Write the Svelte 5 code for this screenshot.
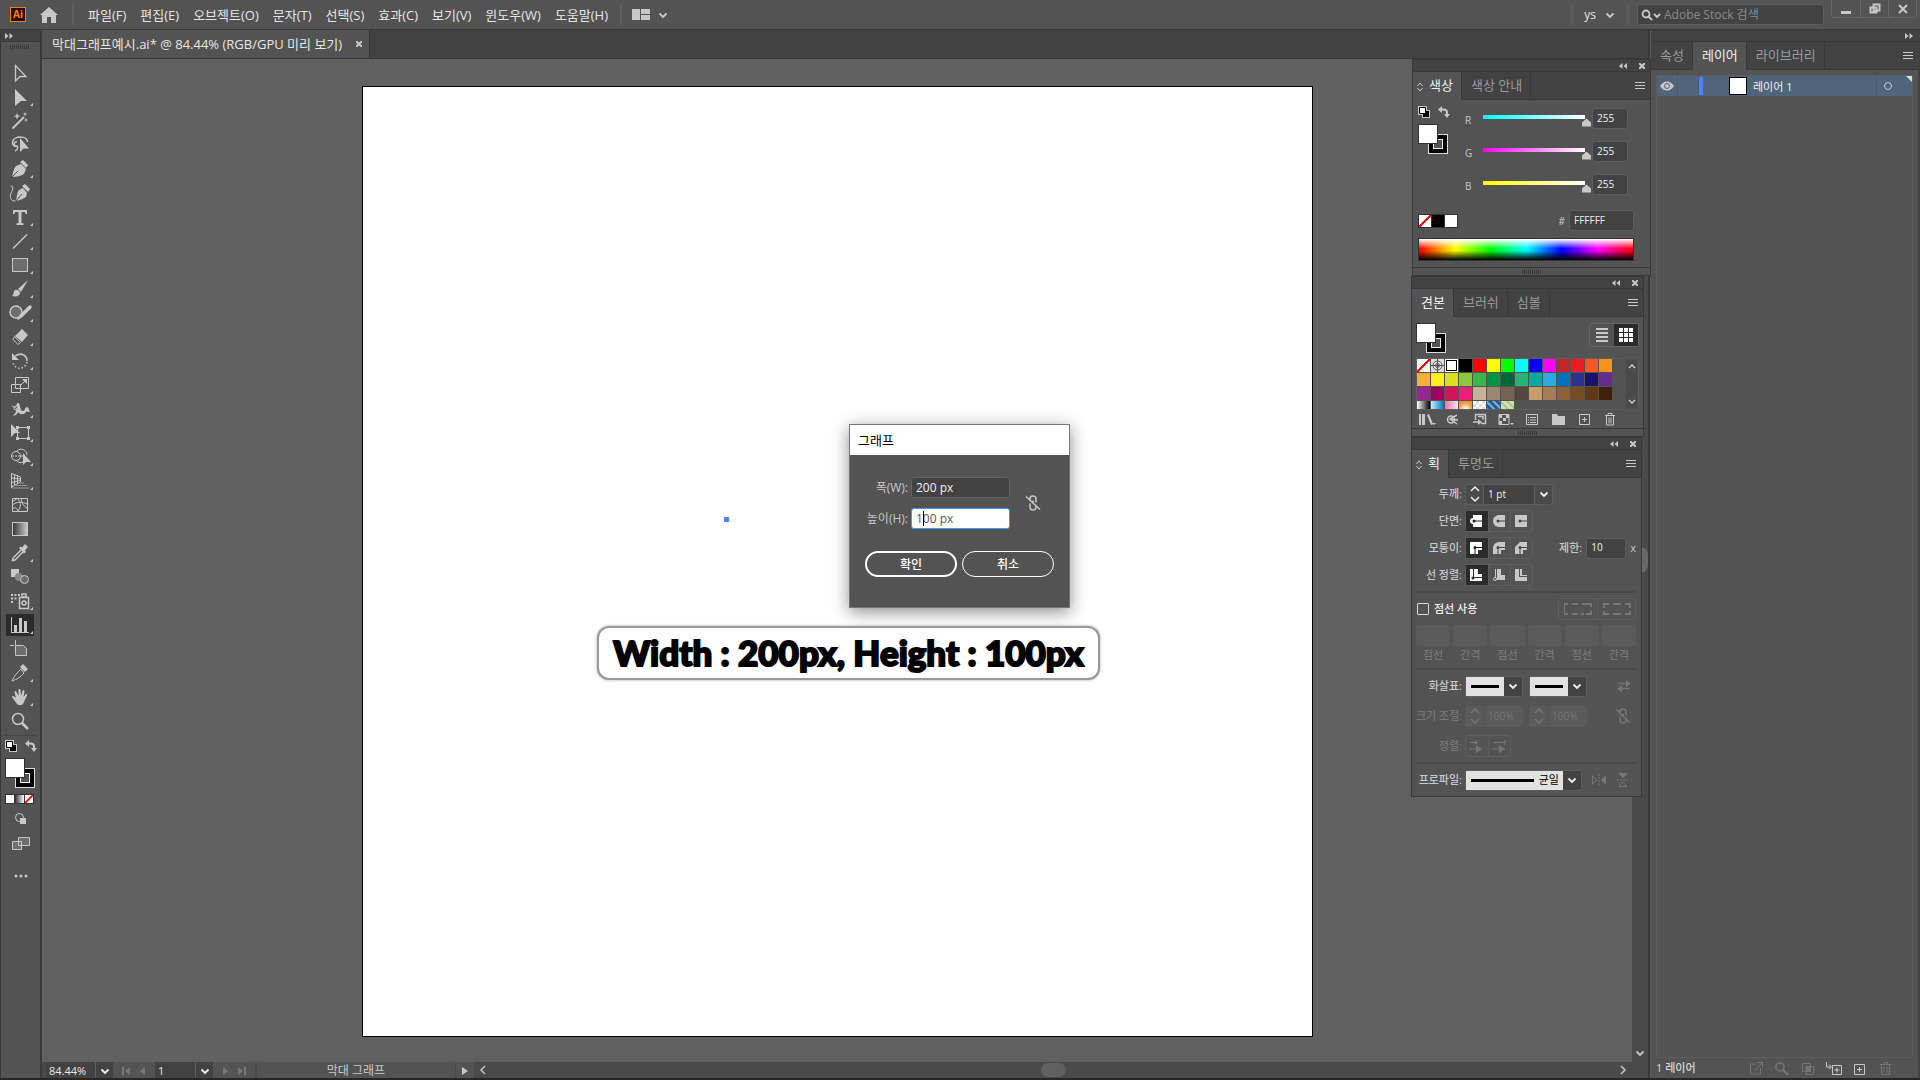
<script>
  const menus = ['파일(F)', '편집(E)', '오브젝트(O)', '문자(T)', '선택(S)', '효과(C)', '보기(V)', '윈도우(W)', '도움말(H)'];

  const tools = [
    { name: 'Selection', icon: '<path d="M15.5 4.5L26 15.5H20L15.5 20z" fill="none" stroke="currentColor" stroke-width="1.300"/>' },
    { name: 'Direct Selection', more: true, icon: '<path d="M15 4l12 12h-6l-6 5z"/>' },
    { name: 'Magic Wand', icon: '<path d="M12.500 19.500L24 8" stroke="currentColor" stroke-width="2"/><path d="M17 4l1 2.500 2.500.5-2.500 1-1 2.500-1-2.500-2.500-1 2.500-.5zM25 3l.6 1.600 1.600.5-1.600.6-.6 1.600-.6-1.600-1.600-.6 1.600-.5zM26 9l.6 1.400 1.400.6-1.400.6-.6 1.400-.6-1.400-1.400-.6 1.400-.6z"/>' },
    { name: 'Lasso', icon: '<path d="M18 13c-4 1-6-1-5.500-4 .5-3 4-5 8-5s7 2 7 5M17 9c-3-1-4 4-1 4s1.500 4-1 5" fill="none" stroke="currentColor" stroke-width="1.500"/><path d="M20 5v14l3.500-3.500H29z"/>' },
    { name: 'Pen', more: true, icon: '<path d="M12 20c1-5 2-9 4-11l5-2 5 5-2 5c-3 2-7 3-12 3z"/><path d="M12 20l6-6" stroke="#535353"/><path d="M20 5l3-2 5 5-2 3z"/>' },
    { name: 'Curvature', icon: '<path d="M16 20c1-5 1-9 3-11l4-2 4 5-1 4c-3 2-6 3-10 4z"/><path d="M16 20l6-7" stroke="#535353"/><path d="M22 5l3-2 5 5-2 3z"/><path d="M10.500 5c5 0 1 5 0 9-.5 4 1 6 5 6" fill="none" stroke="currentColor"/>' },
    { name: 'Type', more: true, icon: '<path d="M13 5h14v4h-1.500l-.5-2h-3.500v11l2 .5V20h-7v-1.500l2-.5V7H15l-.5 2H13z"/>' },
    { name: 'Line Segment', more: true, icon: '<path d="M13 19.500L27 5.500" stroke="currentColor" stroke-width="1.500"/>' },
    { name: 'Rectangle', more: true, icon: '<rect x="12.500" y="5.500" width="15" height="13" fill="#6e6e6e" stroke="currentColor"/>' },
    { name: 'Paintbrush', more: true, icon: '<path d="M28 3l-7 12-3-3z"/><path d="M12 19c2-1 1-4 3-6 2-1 5 1 5 3 0 3-4 4-8 3z"/>' },
    { name: 'Shaper', more: true, icon: '<circle cx="16" cy="11" r="6" fill="#6e6e6e" stroke="currentColor" stroke-width="1.500"/><path d="M30 6l-9 9" stroke="currentColor" stroke-width="3.500" stroke-linecap="round"/><path d="M17 19l1.500-4 2.500 2.500z"/>' },
    { name: 'Eraser', more: true, icon: '<path d="M22 4l6 6-6 7-7-6z"/><path d="M14.500 11.500l6 6-2.500 2-5-5z" fill="none" stroke="currentColor"/>' },
    { name: 'Rotate', more: true, icon: '<path d="M15 7c6-4 12-1 12 5" fill="none" stroke="currentColor" stroke-width="1.500"/><path d="M12 4v7h7z"/><path d="M27 13c-1 7-11 9-14 1" fill="none" stroke="currentColor" stroke-width="1.500" stroke-dasharray="1.500 2"/>' },
    { name: 'Scale', more: true, icon: '<path d="M15.500 4.500h13v11h-13zM11.500 11.500h9v8h-9zM20 13l5-5" fill="none" stroke="currentColor"/><path d="M22 6h5v5z"/>' },
    { name: 'Width', more: true, icon: '<path d="M12 18c7 0 2-11 6-12 3 0 1 8 5 8 2 0 2-4 4-4s2 4 3 5c-3 0-3-1-4 0-2 3-6 3-8 0-1 3-3 4-6 3z"/><circle cx="16" cy="11" r="2" fill="#535353" stroke="currentColor"/><path d="M12 9l4 2 7 5" fill="none" stroke="currentColor"/>' },
    { name: 'Free Transform', more: true, icon: '<path d="M17.500 6.500h11v11h-11z" fill="none" stroke="currentColor"/><path d="M27 5h3v3h-3zM27 16h3v3h-3zM16 16h3v3h-3zM16 5h3v3h-3z"/><path d="M11 3l9 9h-5l-4 4z"/>' },
    { name: 'Shape Builder', more: true, icon: '<circle cx="16" cy="11" r="4.500" fill="none" stroke="currentColor"/><path d="M17 6c4-4 10-1 10 4M17 16c2 2 4 2 6 1" fill="none" stroke="currentColor"/><path d="M12 11h12" stroke="currentColor" stroke-dasharray="2 1"/><path d="M23 8v12l3-3h5z"/>' },
    { name: 'Perspective Grid', more: true, icon: '<path d="M11.500 4v15M11.500 4.500l9 3.500v5l-9 5M14.500 5.500v11M17.500 6.500v8.500M11.500 9l9 1M11.500 13.500l9-2" fill="none" stroke="currentColor"/><path d="M20 14h4M16 16.500h11M12 19h17" stroke="#999"/>' },
    { name: 'Mesh', icon: '<path d="M12.500 5.500h15v13h-15zM12 12c6-4 9-3 16-1M17 5c5 5 4 9 0 14M12 16c4-3 5 0 7 3M22 5c-2 6 4 9 6 11M18 5l-6 4" fill="none" stroke="currentColor"/>' },
    { name: 'Gradient', icon: '<defs><linearGradient id="tg"><stop stop-color="#333"/><stop offset="1" stop-color="#ccc"/></linearGradient></defs><rect x="12.500" y="5.500" width="15" height="13" fill="url(#tg)" stroke="currentColor"/>' },
    { name: 'Eyedropper', more: true, icon: '<path d="M21 9l-8 8-.5 2.500L15 19l8-8" fill="none" stroke="currentColor" stroke-width="1.500"/><path d="M19 7l1.500-1.500 1.500 1 3-3.500 3 3-3 3.500 1 1.500-2 1.500z"/>' },
    { name: 'Blend', icon: '<path d="M11 4h8v8h-8z"/><circle cx="19" cy="12" r="4" fill="#888"/><circle cx="24.500" cy="14.500" r="4" fill="#6e6e6e" stroke="currentColor"/>' },
    { name: 'Symbol Sprayer', more: true, icon: '<path d="M20 8.500h8.500v11h-9v-11zM22 5h4v3h-4z" fill="none" stroke="currentColor" stroke-width="1.500"/><circle cx="24" cy="14" r="2" fill="none" stroke="currentColor" stroke-width="1.500"/><path d="M11 5h2v2h-2zM14.500 5h2v2h-2zM18 5h2v2h-2zM11 8.500h2v2h-2zM14.500 8.500h2v2h-2zM11 12h2v2h-2z"/>' },
    { name: 'Column Graph', more: true, active: true, icon: '<path d="M11 4h1v15h17v1H11zM14 12h3v7h-3zM19 5h3v14h-3zM24 8h3v11h-3z"/>' },
    { name: 'Artboard', icon: '<path d="M10 8.500h4M15.500 3v5" stroke="currentColor"/><path d="M15.500 8.500h8l3 3v7h-11z" fill="#6e6e6e" stroke="currentColor"/>' },
    { name: 'Slice', more: true, icon: '<path d="M12 20c2-5 5-8 9-12l3 4c-4 5-7 6-12 8z" fill="none" stroke="currentColor"/><path d="M20 6l3-3 5 5-3 3z"/>' },
    { name: 'Hand', more: true, icon: '<path d="M17 19l-5-7c0-1.500 1.500-1.500 4 1L14.500 7c0-1.500 1.500-1.500 2 0l2 4V5c0-1.500 2-1.500 2 0l.5 6 1.500-5c.5-1.500 2-1 2 .5L23.500 12l2-2.500c1-1 2 0 1.500 1L23 19c-1 1.500-5 1.500-6 0z"/>' },
    { name: 'Zoom', icon: '<circle cx="18" cy="10" r="5.500" fill="none" stroke="currentColor" stroke-width="1.500"/><path d="M22 14l6 6" stroke="currentColor" stroke-width="2.500"/>' }
  ];

  const channels = [
    { label: 'R', color: '#00ffff' },
    { label: 'G', color: '#ff00ff' },
    { label: 'B', color: '#ffff00' }
  ];

  const solidSwatches = [
    '#000000', '#ff0000', '#ffff00', '#00ff00', '#00ffff', '#0000ff', '#ff00ff', '#c1272d', '#ed1c24', '#f15a24', '#f7931e',
    '#fbb03b', '#fcee21', '#d9e021', '#8cc63f', '#39b54a', '#009245', '#006837', '#22b573', '#00a99d', '#29abe2', '#0071bc', '#2e3192', '#1b1464', '#662d91',
    '#93278f', '#9e005d', '#d4145a', '#ed1e79', '#c7b299', '#998675', '#736357', '#534741', '#c69c6d', '#a67c52', '#8c6239', '#754c24', '#603813', '#42210b'
  ];

  const patternSwatches = [
    'linear-gradient(90deg, #fff, #000)',
    'linear-gradient(90deg, #c8ecff, #0071bc)',
    'linear-gradient(90deg, #ff6ba8, #eee)',
    'radial-gradient(circle at 50% 60%, #fff, #ff931e 70%)',
    'repeating-conic-gradient(#ddd 0 25%, #fff 0 50%) 0 0 / 6px 6px',
    'repeating-linear-gradient(45deg, #1f5c99 0 2px, #7fb4d6 3px 4px, #25609b 5px)',
    'repeating-linear-gradient(45deg, #e3dc9a 0 2px, #9cc98f 3px 4px, #cfe2dc 5px)'
  ];

  const swatchActions = [
    { name: 'Swatch libraries', icon: '<path d="M2 3h2v11H2zM5 3h3v11H5zM10 4l2-1 4 10-2 1zM15 12h4l-2 2z"/>' },
    { name: 'Swatch folder', icon: '<path d="M14 4L7 8l7 5M7 8l8 1" fill="none" stroke="currentColor" stroke-width="1.500"/><circle cx="8" cy="8.500" r="3.500" fill="none" stroke="currentColor" stroke-width="1.500"/>' },
    { name: 'Add used colors', icon: '<path d="M6.500 9V3.500h10v9H12M9 5.500h5v3M4 11h6" fill="none" stroke="currentColor" stroke-width="1.500"/><path d="M9 8l4 3-4 3z"/>' },
    { name: 'Swatch kinds', icon: '<path d="M4 3.500h10v10H4z" fill="none" stroke="currentColor"/><path d="M4 4h3v3H4zM11 4h3v3h-3zM8 7h3v3H8zM4 10h3v3H4zM15 12h4l-2 2z"/>' },
    { name: 'Swatch options', icon: '<path d="M4.500 3.500h11v10h-11zM6 6.500h1M8 6.500h6M6 9h1M8 9h6M6 11.500h1M8 11.500h6" fill="none" stroke="currentColor"/>' },
    { name: 'New color group', icon: '<path d="M4 3h5l1 2h7v9H4z"/>' },
    { name: 'New swatch', icon: '<path d="M5.500 3.500h10v10h-10zM8 8.500h5M10.500 6v5" fill="none" stroke="currentColor"/>' },
    { name: 'Delete swatch', icon: '<path d="M5 4.500h10M8 4V2.500h4V4M6.500 5v9h7V5M9 6.500v6M11 6.500v6" fill="none" stroke="currentColor"/>' }
  ];

  const strokeRows = [
    {
      label: '단면:',
      icons: [
        '<path d="M7 4h9v12H7v-3a3 3 0 010-6z"/><path d="M8 10h8" stroke="#222"/><circle cx="8" cy="10" r="1.500" fill="#222"/>',
        '<path d="M10 4h6v12h-6a6 6 0 010-12z"/><path d="M10 10h6" stroke="#444"/><circle cx="9" cy="10" r="1.500" fill="#444"/>',
        '<path d="M4 4h12v12H4z"/><path d="M10 10h6" stroke="#444"/><circle cx="9" cy="10" r="1.500" fill="#444"/>'
      ]
    },
    {
      label: '모퉁이:',
      miter: true,
      icons: [
        '<path d="M4 4h12v8h-4v4H4z"/><path d="M9 16V9.500h7" fill="none" stroke="#222"/><circle cx="9" cy="9.500" r="1.500" fill="#222"/>',
        '<path d="M4 16v-6a6 6 0 016-6h6v8h-4v4z"/><path d="M9 16V9.500h7" fill="none" stroke="#444"/><circle cx="9" cy="9.500" r="1.500" fill="#444"/>',
        '<path d="M4 16V9l5-5h7v8h-4v4z"/><path d="M9 16V9.500h7" fill="none" stroke="#444"/><circle cx="9" cy="9.500" r="1.500" fill="#444"/>'
      ]
    },
    {
      label: '선 정렬:',
      icons: [
        '<path d="M4 4h3v9h9v3H4zM8 4h4v5h4v3H8z"/><circle cx="7" cy="13" r="1.500" fill="#222"/>',
        '<path d="M8 4h4v6h4v5H8z"/><path d="M6.500 4v9" stroke="currentColor"/><circle cx="6" cy="14" r="1.500" fill="none" stroke="currentColor"/>',
        '<path d="M4 4h4v8h8v4H4zM9 4h2v6h5v1H9z"/>'
      ]
    }
  ];

  const layerActions = [
    { name: 'Export', dim: true, icon: '<path d="M10 5H4.500v10h10v-6M9 11l7-7M11.500 3.500h5v5" fill="none" stroke="currentColor"/>' },
    { name: 'Locate object', dim: true, icon: '<circle cx="8" cy="8" r="4" fill="none" stroke="currentColor" stroke-width="1.500"/><path d="M11 11l5 5" stroke="currentColor" stroke-width="2"/>' },
    { name: 'Clipping mask', dim: true, icon: '<path d="M4.500 4.500h8v8h-8zM8 7.500h7.500v8H8z" fill="none" stroke="currentColor"/><path d="M8 7h5v6H8z"/>' },
    { name: 'New sublayer', icon: '<path d="M8.500 6.500h9v9h-9zM10.500 11h5M13 8.500v5M2.500 3v5H7M5 5.500L7.500 8 5 10" fill="none" stroke="currentColor"/>' },
    { name: 'New layer', icon: '<path d="M4.500 5.500h10v10h-10zM7 10.500h5M9.500 8v5" fill="none" stroke="currentColor"/>' },
    { name: 'Delete layer', dim: true, icon: '<path d="M4 5.500h11M8 5V3.500h3.500V5M5.500 6v9.500h8V6M8 7.500v6M11 7.500v6" fill="none" stroke="currentColor"/>' }
  ];

  let width = $state('200 px');
  let height = $state('100 px');
</script>

{#snippet chevron()}
  <svg width="10" height="10" viewBox="0 0 10 10"><path d="M1.500 3.500L5 7l3.500-3.500" fill="none" stroke="currentColor" stroke-width="1.800" /></svg>
{/snippet}

{#snippet arrows()}
  <svg width="12" height="20" viewBox="0 0 12 20"><path d="M2 7l4-4 4 4M2 13l4 4 4-4" fill="none" stroke="currentColor" stroke-width="1.500" /></svg>
{/snippet}

{#snippet burger()}
  <button class="burger" aria-label="Panel menu"><span></span><span></span><span></span></button>
{/snippet}

{#snippet panelBar()}
  <div class="panel-bar">
    <button aria-label="Collapse"><svg width="8" height="6" viewBox="0 0 8 6"><path d="M3.500 0v6L0 3zM8 0v6L4.500 3z" /></svg></button>
    <button aria-label="Close"><svg width="6" height="6" viewBox="0 0 6 6"><path d="M0 0l6 6M6 0L0 6" stroke="currentColor" stroke-width="2" /></svg></button>
  </div>
{/snippet}

{#snippet updown()}
  <svg class="updown" width="6" height="10" viewBox="0 0 6 10"><path d="M.5 4L3 1l2.500 3M.5 6L3 9l2.500-3" fill="none" stroke="currentColor" /></svg>
{/snippet}

{#snippet swapIcons()}
  <svg width="12" height="12" viewBox="0 0 12 12"><path d="M4 4h8v8H4zM0 0h9v9H0z" fill="#c8c8c8" /><path d="M5 5h6v6H5z" fill="#000" /><path d="M1.500 1.500h6v6h-6z" fill="#fff" stroke="#000" /></svg>
  <svg width="12" height="12" viewBox="0 0 12 12"><path d="M3 3.500h2.500c2 0 3.500 1 3.500 3V9" fill="none" stroke="currentColor" stroke-width="2" /><path d="M0 3.500L4 0v7zM6 8h6l-3 4z" /></svg>
{/snippet}

{#snippet fillStroke()}
  <div class="fill-stroke"><span class="stroke-box"></span><span class="fill-box"></span></div>
{/snippet}

{#snippet link()}
  <svg width="16" height="16" viewBox="0 0 16 16"><path d="M5 6V4a3 3 0 016 0v3.500M5 8.500V12a3 3 0 006 0v-1M8 5.500v2M1 1.500l14 13" fill="none" stroke="currentColor" stroke-width="1.500" /></svg>
{/snippet}

<div class="app">
  <header class="menubar">
    <span class="ai-logo">Ai</span>
    <button class="home" aria-label="Home">
      <svg width="18" height="16" viewBox="0 0 18 16"><path d="M9 0l9 8h-2v8h-5v-6H7v6H2V8H0z" /></svg>
    </button>
    <span class="sep"></span>
    <nav>
      {#each menus as menu}
        <button>{menu}</button>
      {/each}
    </nav>
    <span class="sep"></span>
    <button class="workspace" aria-label="Arrange documents">
      <svg width="18" height="11" viewBox="0 0 18 11"><path d="M0 0h8v11H0zM9 0h9v5H9zM9 6h9v5H9z" /></svg>
      {@render chevron()}
    </button>
    <div class="menubar-right">
      <span class="sep"></span>
      <button class="user">ys {@render chevron()}</button>
      <span class="sep"></span>
      <label class="search">
        <svg width="20" height="12" viewBox="0 0 20 12"><circle cx="5" cy="5" r="3.500" fill="none" stroke="currentColor" stroke-width="1.800" /><path d="M7 7l4 4M13 5l3 3 3-3" fill="none" stroke="currentColor" stroke-width="1.800" /></svg>
        <input type="text" placeholder="Adobe Stock 검색" aria-label="Adobe Stock 검색" />
      </label>
      <div class="window-buttons">
        <button aria-label="Minimize"><svg width="12" height="12" viewBox="0 0 12 12"><path d="M1 8h10v3H1z" /></svg></button>
        <button aria-label="Restore"><svg width="12" height="12" viewBox="0 0 12 12"><path d="M4.500 1.500h6v6h-6zM1.500 4.500h6v5h-6z" fill="none" stroke="currentColor" stroke-width="2" /></svg></button>
        <button aria-label="Close"><svg width="12" height="12" viewBox="0 0 12 12"><path d="M2 2l8 8M10 2l-8 8" stroke="currentColor" stroke-width="2" /></svg></button>
      </div>
    </div>
  </header>

  <main>
    <!-- Toolbar -->
    <aside class="toolbar">
      <div class="toolbar-head"><svg width="8" height="6" viewBox="0 0 8 6"><path d="M0 0v6l3.500-3zM4.500 0v6L8 3z" /></svg></div>
      <div class="grip tool-grip"></div>
      <div class="tool-list">
        {#each tools as tool}
          <button class="tool" class:active={tool.active} aria-label={tool.name}>
            <svg width="40" height="24" viewBox="0 0 40 24">
              {@html tool.icon}
              {#if tool.more}<path d="M33 18v3h-3z" />{/if}
            </svg>
          </button>
        {/each}
      </div>
      <div class="tool-colors">
        <div class="swap-row">{@render swapIcons()}</div>
        {@render fillStroke()}
        <div class="modes"><span></span><span class="mode-gradient"></span><span class="none"></span></div>
      </div>
      <div class="tool-bottom">
        <svg width="12" height="12" viewBox="0 0 12 12"><circle cx="4.500" cy="4.500" r="4" fill="none" stroke="currentColor" /><path d="M5 5h6v6H5z" /></svg>
        <svg width="18" height="13" viewBox="0 0 18 13"><path d="M6.500.5h11v8h-11zM.5 4.500h9v8h-9z" fill="#6e6e6e" stroke="currentColor" /></svg>
        <svg class="dots" width="14" height="4" viewBox="0 0 14 4"><circle cx="2" cy="2" r="1.500" /><circle cx="7" cy="2" r="1.500" /><circle cx="12" cy="2" r="1.500" /></svg>
      </div>
    </aside>

    <!-- Document -->
    <section class="document">
      <div class="doc-tabs">
        <div class="doc-tab">
          <span>막대그래프예시.ai* @ 84.44% (RGB/GPU 미리 보기)</span>
          <button aria-label="Close document"><svg width="6" height="6" viewBox="0 0 6 6"><path d="M0 0l6 6M6 0L0 6" stroke="currentColor" stroke-width="2" /></svg></button>
        </div>
      </div>
      <div class="doc-body">
        <div class="canvas">
          <div class="artboard"></div>
          <span class="anchor"></span>

          <form class="dialog" aria-label="그래프" onsubmit={(e) => e.preventDefault()}>
            <h2>그래프</h2>
            <div class="dialog-fields">
              <div class="field-list">
                <label for="graph-width">폭(W):</label>
                <input id="graph-width" type="text" bind:value={width} />
                <label for="graph-height">높이(H):</label>
                <div class="focused">
                  <input id="graph-height" type="text" bind:value={height} />
                  <span class="caret"></span>
                </div>
              </div>
              <button type="button" aria-label="Constrain proportions">{@render link()}</button>
            </div>
            <div class="dialog-buttons">
              <button type="submit" class="primary">확인</button>
              <button type="button">취소</button>
            </div>
          </form>

          <p class="caption">Width : 200px, Height : 100px</p>
        </div>
        <div class="vscroll">
          <span class="vthumb"></span>
          <span class="vdown">{@render chevron()}</span>
        </div>
      </div>
      <footer class="status">
        <input class="zoom" type="text" value="84.44%" aria-label="Zoom" />
        <button class="drop" aria-label="Zoom levels">{@render chevron()}</button>
        <div class="steps">
          <svg width="8" height="8" viewBox="0 0 8 8"><path d="M0 0h2v8H0zM8 0v8L3 4z" /></svg>
          <svg width="8" height="8" viewBox="0 0 8 8"><path d="M7 0v8L2 4z" /></svg>
        </div>
        <input class="page" type="text" value="1" aria-label="Artboard" />
        <button class="drop" aria-label="Artboards">{@render chevron()}</button>
        <div class="steps">
          <svg width="8" height="8" viewBox="0 0 8 8"><path d="M1 0v8l5-4z" /></svg>
          <svg width="8" height="8" viewBox="0 0 8 8"><path d="M6 0h2v8H6zM0 0v8l5-4z" /></svg>
        </div>
        <span class="status-text">막대 그래프</span>
        <button class="play" aria-label="Status options"><svg width="6" height="8" viewBox="0 0 6 8"><path d="M0 0v8l6-4z" /></svg></button>
        <div class="hscroll">
          <svg width="6" height="10" viewBox="0 0 6 10"><path d="M5 1L1 5l4 4" fill="none" stroke="currentColor" stroke-width="1.500" /></svg>
          <span class="hthumb"></span>
          <svg width="6" height="10" viewBox="0 0 6 10"><path d="M1 1l4 4-4 4" fill="none" stroke="currentColor" stroke-width="1.500" /></svg>
        </div>
      </footer>
    </section>

    <!-- Layers dock -->
    <aside class="dock">
      <div class="dock-head"><svg width="8" height="6" viewBox="0 0 8 6"><path d="M0 0v6l3.500-3zM4.500 0v6L8 3z" /></svg></div>
      <div class="tabs">
        <button>속성</button>
        <button class="on">레이어</button>
        <button>라이브러리</button>
        {@render burger()}
      </div>
      <div class="layers">
        <div class="layer">
          <span class="eye"><svg width="14" height="10" viewBox="0 0 14 10"><path d="M0 5c4-6 10-6 14 0-4 6-10 6-14 0z" /><circle cx="7" cy="5" r="2.500" fill="none" stroke="#50657a" /></svg></span>
          <span class="lock"></span>
          <span class="layer-color"></span>
          <span class="thumb"></span>
          <span class="layer-name">레이어 1</span>
          <span class="target"><svg width="10" height="10" viewBox="0 0 10 10"><circle cx="5" cy="5" r="3.500" fill="none" stroke="currentColor" /></svg></span>
          <span class="corner"></span>
        </div>
      </div>
      <div class="dock-foot">
        <span>1 레이어</span>
        {#each layerActions as action}
          <button class:dim={action.dim} aria-label={action.name}><svg width="20" height="18" viewBox="0 0 20 18">{@html action.icon}</svg></button>
        {/each}
      </div>
    </aside>

    <!-- Floating panels -->
    <div class="panels">
      <section class="panel color-panel">
        {@render panelBar()}
        <div class="tabs">
          <button class="on">{@render updown()}색상</button>
          <button>색상 안내</button>
          {@render burger()}
        </div>
        <div class="color-body">
          <div class="color-top">
            <div class="color-boxes">
              <div class="swap-row">{@render swapIcons()}</div>
              {@render fillStroke()}
            </div>
            <div class="channels">
              {#each channels as channel}
                <div class="channel">
                  <label for="ch-{channel.label}">{channel.label}</label>
                  <input type="range" min="0" max="255" value="255" aria-label="{channel.label} slider" style="--from: {channel.color}" />
                  <input id="ch-{channel.label}" class="box" type="text" value="255" />
                </div>
              {/each}
            </div>
          </div>
          <div class="hex-row">
            <div class="basic"><span class="none"></span><span class="black"></span><span></span></div>
            <label for="hex">#</label>
            <input id="hex" class="box" type="text" value="FFFFFF" />
          </div>
          <div class="spectrum"></div>
        </div>
        <div class="panel-foot"><div class="grip"></div></div>
      </section>

      <section class="panel swatch-panel">
        {@render panelBar()}
        <div class="tabs">
          <button class="on">견본</button>
          <button>브러쉬</button>
          <button>심볼</button>
          {@render burger()}
        </div>
        <div class="swatch-body">
          <div class="swatch-top">
            {@render fillStroke()}
            <div class="view-toggle">
              <button aria-label="List view"><svg width="12" height="14" viewBox="0 0 12 14"><path d="M0 0h12v2H0zM0 4h12v2H0zM0 8h12v2H0zM0 12h12v2H0z" /></svg></button>
              <button class="on" aria-label="Thumbnail view"><svg width="14" height="14" viewBox="0 0 14 14"><path d="M0 0h4v4H0zM5 0h4v4H5zM10 0h4v4h-4zM0 5h4v4H0zM5 5h4v4H5zM10 5h4v4h-4zM0 10h4v4H0zM5 10h4v4H5zM10 10h4v4h-4z" /></svg></button>
            </div>
          </div>
          <div class="swatch-list">
            <div class="swatch-grid">
              <span class="none"></span>
              <span class="registration"><svg width="13" height="13" viewBox="0 0 13 13"><circle cx="6.500" cy="6.500" r="4.500" fill="none" stroke="#555" /><circle cx="6.500" cy="6.500" r="2" fill="none" stroke="#555" /><path d="M6.500 0v13M0 6.500h13" stroke="#555" /></svg></span>
              <span class="selected"><i></i></span>
              {#each solidSwatches as color}
                <span style="background: {color}"></span>
              {/each}
              {#each patternSwatches as pattern}
                <span style="background: {pattern}"></span>
              {/each}
            </div>
            <div class="swatch-scroll">
              <svg width="8" height="6" viewBox="0 0 8 6"><path d="M1 5l3-3 3 3" fill="none" stroke="currentColor" stroke-width="1.500" /></svg>
              <svg width="8" height="6" viewBox="0 0 8 6"><path d="M1 1l3 3 3-3" fill="none" stroke="currentColor" stroke-width="1.500" /></svg>
            </div>
          </div>
          <div class="swatch-actions">
            {#each swatchActions as action}
              <button aria-label={action.name}><svg width="20" height="17" viewBox="0 0 20 17">{@html action.icon}</svg></button>
            {/each}
          </div>
        </div>
        <div class="panel-foot"><div class="grip"></div></div>
      </section>

      <section class="panel stroke-panel">
        {@render panelBar()}
        <div class="tabs">
          <button class="on">{@render updown()}획</button>
          <button>투명도</button>
          {@render burger()}
        </div>
        <div class="stroke-body">
          <div class="group">
            <div class="row">
              <label for="weight">두께:</label>
              <div class="combo weight">
                <span class="spin">{@render arrows()}</span>
                <input id="weight" type="text" value="1 pt" />
                <button aria-label="Weight presets">{@render chevron()}</button>
              </div>
            </div>
            {#each strokeRows as row}
              <div class="row">
                <span class="row-label">{row.label}</span>
                <div class="btns">
                  {#each row.icons as icon, i}
                    <button class:on={i === 0} aria-label="{row.label} {i + 1}"><svg width="20" height="20" viewBox="0 0 20 20">{@html icon}</svg></button>
                  {/each}
                </div>
                {#if row.miter}
                  <div class="miter">
                    <label for="miter">제한:</label>
                    <input id="miter" class="box" type="text" value="10" />
                    <span>x</span>
                  </div>
                {/if}
              </div>
            {/each}
          </div>
          <div class="group">
            <div class="row dash-row">
              <label class="check"><input type="checkbox" />점선 사용</label>
              <div class="dash-btns">
                <button aria-label="Preserve dashes"><svg width="28" height="12" viewBox="0 0 28 12"><path d="M4 1H0v10h4M8 1h6M18 1h9v3M27 8v3h-5M8 11h6M17 11h3" fill="none" stroke="currentColor" stroke-width="2" /></svg></button>
                <button aria-label="Align dashes"><svg width="28" height="12" viewBox="0 0 28 12"><path d="M6 1H1v4M1 8v3h5M10 1h8M10 11h8M22 1h5v4M27 8v3h-5" fill="none" stroke="currentColor" stroke-width="2" /></svg></button>
              </div>
            </div>
            <div class="dashes">
              {#each ['점선', '간격', '점선', '간격', '점선', '간격'] as name}
                <label><input type="text" disabled />{name}</label>
              {/each}
            </div>
          </div>
          <div class="group wide">
            <div class="row">
              <span class="row-label">화살표:</span>
              <div class="arrowheads">
                {#each ['Start arrowhead', 'End arrowhead'] as name}
                  <div class="line-select">
                    <select aria-label={name}><option></option></select>
                    <i></i>
                    <span>{@render chevron()}</span>
                  </div>
                {/each}
              </div>
              <span class="end dim"><svg width="14" height="12" viewBox="0 0 14 12"><path d="M1 3.500h8M5 8.500h8" stroke="currentColor" stroke-width="1.500" /><path d="M9 0l5 3.500L9 7zM5 5L0 8.500 5 12z" /></svg></span>
            </div>
            <div class="row dim">
              <span class="row-label">크기 조절:</span>
              <div class="arrowheads">
                {#each ['Start scale', 'End scale'] as name}
                  <div class="combo scale">
                    <span class="spin">{@render arrows()}</span>
                    <input type="text" value="100%" aria-label={name} disabled />
                  </div>
                {/each}
              </div>
              <span class="end">{@render link()}</span>
            </div>
            <div class="row dim">
              <span class="row-label">정렬:</span>
              <div class="btns">
                <button aria-label="Extend arrow tip" disabled><svg width="20" height="20" viewBox="0 0 20 20"><path d="M4 6.500h8M4 13h8" stroke="currentColor" /><path d="M10 9l6 4-6 4zM9 4l3 2.500L9 9z" /></svg></button>
                <button aria-label="Place arrow tip" disabled><svg width="20" height="20" viewBox="0 0 20 20"><path d="M4 6.500h12M4 13h8M16 4v5" stroke="currentColor" /><path d="M10 9l6 4-6 4z" /></svg></button>
              </div>
            </div>
          </div>
          <div class="group wide">
            <div class="row">
              <label for="profile">프로파일:</label>
              <div class="line-select profile">
                <select id="profile"><option>균일</option></select>
                <i></i>
                <span>{@render chevron()}</span>
              </div>
              <div class="flips dim">
                <svg width="14" height="14" viewBox="0 0 14 14"><path d="M.5 3v8L5 7z" fill="none" stroke="currentColor" /><path d="M14 2v10L9 7z" /><path d="M7 1v12" stroke="currentColor" stroke-dasharray="2 1" /></svg>
                <svg width="14" height="14" viewBox="0 0 14 14"><path d="M2 0h10L7 5z" /><path d="M3 13.500h8L7 9z" fill="none" stroke="currentColor" /><path d="M1 7h12" stroke="currentColor" stroke-dasharray="2 1" /></svg>
              </div>
            </div>
          </div>
        </div>
      </section>
    </div>
  </main>

  <div class="taskbar-edge"></div>
</div>

<style>
  :global(body) {
    margin: 0;
    overflow: hidden;
  }

  .app {
    display: flex;
    flex-direction: column;
    height: 100vh;
    background: #535353;
    color: #d6d6d6;
    fill: #c8c8c8;
    font-family: 'Open Sans', 'Noto Sans CJK KR', sans-serif;
    font-size: 12px;
    line-height: 16px;
  }

  .app :global(*) {
    box-sizing: border-box;
  }

  button,
  input,
  select {
    margin: 0;
    padding: 0;
    border: 0;
    border-radius: 0;
    background: none;
    color: inherit;
    font: inherit;
    outline: none;
  }

  svg {
    display: block;
    flex-shrink: 0;
    fill: currentColor;
    color: #c8c8c8;
  }

  .dim,
  .dim svg {
    color: #767676;
  }

  .sep {
    width: 2px;
    height: 20px;
    background: #5e5e5e;
  }

  /* Menu bar */
  .menubar {
    display: flex;
    align-items: center;
    height: 30px;
    padding-left: 10px;
    border-bottom: 1px solid #383838;
    color: #e6e6e6;
  }

  .ai-logo {
    width: 16px;
    height: 15px;
    border: 1px solid #ff7c00;
    background: #2b0e00;
    color: #ff7c00;
    font-size: 10px;
    font-weight: 700;
    line-height: 13px;
    text-align: center;
  }

  .home {
    margin: 0 14px;
  }

  nav {
    display: flex;
    gap: 14px;
    margin: 0 12px 0 14px;
    font-size: 13px;
  }

  nav button {
    white-space: nowrap;
  }

  .workspace {
    display: flex;
    align-items: center;
    gap: 8px;
    margin-left: 10px;
  }

  .menubar-right {
    display: flex;
    align-items: center;
    align-self: stretch;
    margin-left: auto;
  }

  .user {
    display: flex;
    align-items: center;
    gap: 9px;
    margin: 0 12px 0 11px;
  }

  .search {
    display: flex;
    align-items: center;
    gap: 3px;
    width: 187px;
    height: 21px;
    margin: 0 7px 0 8px;
    padding-left: 3px;
    border: 1px solid #5e5e5e;
    border-radius: 3px;
    background: #424242;
  }

  .search input {
    width: 100%;
  }

  .search input::placeholder {
    color: #8a8a8a;
    opacity: 1;
  }

  .window-buttons {
    display: flex;
    align-self: flex-start;
    height: 18px;
    margin-right: 3px;
    border: 1px solid #666;
    border-top: 0;
    border-radius: 0 0 3px 3px;
  }

  .window-buttons button {
    display: flex;
    align-items: center;
    justify-content: center;
    width: 28px;
  }

  .window-buttons button + button {
    border-left: 1px solid #666;
  }

  main {
    position: relative;
    display: flex;
    flex: 1;
    min-height: 0;
  }

  /* Toolbar */
  .toolbar {
    width: 42px;
    border-left: 1px solid #383838;
    border-right: 2px solid #3b3b3b;
  }

  .toolbar-head {
    height: 12px;
    padding: 3px 4px;
    border-bottom: 1px solid #383838;
    background: #424242;
  }

  .grip {
    width: 20px;
    height: 4px;
    background: repeating-linear-gradient(90deg, #383838 0 1px, transparent 1px 2px);
  }

  .tool-grip {
    margin: 3px 9px 12px;
  }

  .tool-list {
    display: flex;
    flex-direction: column;
    padding-bottom: 2px;
  }

  .tool {
    display: flex;
    width: 39px;
    height: 24px;
    margin-left: -1px;
  }

  .tool.active {
    background: linear-gradient(#2b2b2b, #2b2b2b) 6px 1px / 28px 22px no-repeat;
  }

  .tool-colors {
    margin: 0 4px;
    padding-top: 4px;
    border-top: 1px solid #464646;
  }

  .swap-row {
    display: flex;
    justify-content: space-between;
    width: 32px;
  }

  .fill-stroke {
    position: relative;
    width: 30px;
    height: 30px;
    flex-shrink: 0;
  }

  .tool-colors .fill-stroke {
    margin-top: 6px;
  }

  .fill-box,
  .stroke-box {
    position: absolute;
    width: 20px;
    height: 20px;
    border: 1px solid #333;
    background: #fff;
  }

  .fill-box {
    top: 0;
    left: 0;
  }

  .stroke-box {
    right: 0;
    bottom: 0;
    border: 1px solid #ddd;
    background: #535353;
    box-shadow: inset 0 0 0 4px #000, inset 0 0 0 5px #eee;
  }

  .modes,
  .basic {
    display: flex;
    border: 1px solid #333;
    background: #333;
    gap: 1px;
  }

  .modes {
    width: 29px;
    height: 10px;
    margin-top: 6px;
  }

  .modes span,
  .basic span {
    flex: 1;
    background: #fff;
  }

  .modes .mode-gradient {
    background: linear-gradient(90deg, #333, #fff);
  }

  span.none,
  .modes .none,
  .basic .none {
    background: linear-gradient(135deg, #fff 43%, #f00 44% 56%, #fff 57%);
  }

  .tool-bottom {
    display: flex;
    flex-direction: column;
    align-items: center;
    gap: 12px;
    padding-top: 9px;
  }

  .tool-bottom .dots {
    margin-top: 12px;
  }

  /* Document */
  .document {
    display: flex;
    flex: 1;
    flex-direction: column;
    min-width: 0;
    border-right: 2px solid #383838;
  }

  .doc-tabs {
    display: flex;
    height: 29px;
    border-bottom: 1px solid #383838;
    background: #424242;
  }

  .doc-tab {
    display: flex;
    align-items: center;
    gap: 14px;
    padding: 0 7px 0 10px;
    border-right: 1px solid #383838;
    background: #535353;
    color: #e6e6e6;
    font-size: 13px;
  }

  .doc-body {
    display: flex;
    flex: 1;
    min-height: 0;
  }

  .canvas {
    position: relative;
    flex: 1;
    overflow: hidden;
    background: #606060;
  }

  .artboard {
    position: absolute;
    top: 27px;
    left: 320px;
    width: 951px;
    height: 951px;
    border: 1px solid #000;
    background: #fff;
  }

  .anchor {
    position: absolute;
    top: 458px;
    left: 682px;
    width: 5px;
    height: 5px;
    background: #4f80ff;
  }

  .caption {
    position: absolute;
    top: 567px;
    left: 555px;
    width: 503px;
    margin: 0;
    padding: 4px 0 6px;
    border: 2px solid #999;
    border-radius: 12px;
    background: #fff;
    box-shadow: 0 0 3px #aaa;
    color: #000;
    font-family: Lato, sans-serif;
    font-size: 35px;
    font-weight: 900;
    line-height: 40px;
    text-align: center;
    white-space: nowrap;
    -webkit-text-stroke: 2px #000;
  }

  /* Graph dialog */
  .dialog {
    position: absolute;
    top: 365px;
    left: 807px;
    width: 221px;
    border: 1px solid #767676;
    background: #535353;
    box-shadow: 0 4px 16px rgba(0, 0, 0, 0.45);
  }

  .dialog h2 {
    margin: 0;
    padding: 7px 8px;
    background: #fff;
    color: #000;
    font-size: 13px;
    font-weight: 400;
    line-height: 16px;
  }

  .dialog-fields {
    display: flex;
    align-items: center;
    gap: 15px;
    padding: 22px 0 0 14px;
  }

  .field-list {
    display: grid;
    grid-template-columns: 44px 99px;
    gap: 10px 3px;
    align-items: center;
    text-align: right;
    white-space: nowrap;
  }

  .field-list label {
    color: #c8c8c8;
  }

  .field-list input {
    width: 100%;
    height: 21px;
    padding: 0 4px;
    border: 1px solid #646464;
    border-radius: 3px;
    background: #424242;
    color: #f0f0f0;
  }

  .focused {
    position: relative;
    height: 21px;
  }

  .focused input {
    border-color: #3d9bff;
    background: #fff;
    color: #555;
  }

  .caret {
    position: absolute;
    top: 3px;
    left: 12px;
    width: 1px;
    height: 15px;
    background: #000;
  }

  .dialog-buttons {
    display: grid;
    grid-template-columns: 1fr 1fr;
    gap: 5px;
    padding: 22px 15px 30px;
  }

  .dialog-buttons button {
    height: 26px;
    padding-top: 1px;
    border: 1px solid #fff;
    border-radius: 13px;
    color: #fff;
    font-weight: 500;
  }

  .dialog-buttons .primary {
    border-width: 2px;
  }

  .vscroll {
    display: flex;
    flex-direction: column;
    justify-content: space-between;
    width: 16px;
    padding: 488px 0 4px;
    background: #4a4a4a;
  }

  .vthumb {
    height: 26px;
    border-radius: 8px;
    background: #686868;
  }

  .vdown {
    align-self: center;
  }

  /* Status bar */
  .status {
    display: flex;
    height: 16px;
    padding-left: 4px;
    background: #4a4a4a;
    color: #e6e6e6;
    font-size: 11px;
    line-height: 14px;
  }

  .status input {
    padding: 2px 0 0 3px;
    background: #424242;
  }

  .zoom {
    width: 49px;
  }

  .page {
    width: 40px;
  }

  .drop {
    display: flex;
    align-items: center;
    justify-content: center;
    width: 18px;
    padding-top: 2px;
    border-left: 1px solid #5e5e5e;
    background: #424242;
  }

  .steps {
    display: flex;
    align-items: center;
    justify-content: space-around;
    width: 42px;
    padding: 2px 5px 0;
    background: #535353;
  }

  .steps svg {
    color: #767676;
  }

  .status-text {
    width: 200px;
    padding-top: 2px;
    border-left: 2px solid #4a4a4a;
    background: #535353;
    color: #c8c8c8;
    font-size: 12px;
    text-align: center;
  }

  .play {
    display: flex;
    align-items: center;
    justify-content: center;
    width: 18px;
    margin-left: 1px;
    padding-top: 2px;
    background: #535353;
  }

  .hscroll {
    display: flex;
    flex: 1;
    align-items: center;
    justify-content: space-between;
    padding: 0 22px 0 6px;
  }

  .hthumb {
    width: 25px;
    height: 14px;
    border-radius: 7px;
    background: #606060;
  }

  /* Dock */
  .dock {
    display: flex;
    flex-direction: column;
    width: 270px;
    border-right: 2px solid #424242;
    border-left: 1px solid #5a5a5a;
  }

  .dock-head {
    display: flex;
    justify-content: flex-end;
    height: 12px;
    padding: 3px 5px;
    border-bottom: 1px solid #383838;
    background: #424242;
  }

  .tabs {
    display: flex;
    height: 28px;
    background: #424242;
    font-size: 13px;
  }

  .tabs > button:not(.burger) {
    display: flex;
    align-items: center;
    padding: 0 8px 2px 9px;
    border-right: 1px solid #383838;
    border-bottom: 1px solid #383838;
    color: #9a9a9a;
    white-space: nowrap;
  }

  .tabs > button.on:not(.burger) {
    border-bottom-color: #535353;
    background: #535353;
    color: #f0f0f0;
  }

  .updown {
    margin: 4px 6px 0 -5px;
  }

  .burger {
    display: flex;
    flex: 1;
    flex-direction: column;
    gap: 2px;
    align-items: flex-end;
    justify-content: center;
    padding-right: 5px;
    border-bottom: 1px solid #383838;
  }

  .burger span {
    width: 10px;
    height: 1px;
    background: #c8c8c8;
  }

  .layers {
    flex: 1;
    margin: 5px 5px 0;
    border: 1px solid #5e5e5e;
    border-radius: 2px;
  }

  .layer {
    position: relative;
    display: flex;
    align-items: center;
    height: 20px;
    background: #50657a;
  }

  .eye,
  .lock {
    display: flex;
    align-items: center;
    justify-content: center;
    width: 21px;
    height: 20px;
    border-right: 1px solid #475b6f;
  }

  .layer-color {
    width: 4px;
    height: 18px;
    background: #4f80ff;
  }

  .thumb {
    width: 18px;
    height: 18px;
    margin: 0 6px 0 26px;
    border: 1px solid #000;
    background: #fff;
  }

  .layer-name {
    flex: 1;
    padding-top: 1px;
    color: #f0f0f0;
    font-size: 11px;
  }

  .target {
    display: flex;
    align-items: center;
    width: 36px;
    height: 20px;
    padding-left: 6px;
    border-left: 1px solid #475b6f;
  }

  .corner {
    position: absolute;
    top: 0;
    right: 0;
    border-top: 6px solid #ddd;
    border-left: 6px solid transparent;
  }

  .dock-foot {
    display: flex;
    align-items: center;
    gap: 6px;
    height: 20px;
    padding: 0 22px 0 5px;
    font-size: 11px;
  }

  .dock-foot > span {
    flex: 1;
    font-weight: 500;
  }

  /* Floating panels */
  .panels {
    position: absolute;
    top: 29px;
    right: 269px;
    display: flex;
    flex-direction: column;
    align-items: flex-start;
    width: 240px;
  }

  .panel {
    border: 1px solid #383838;
    background: #535353;
  }

  .color-panel {
    width: 239px;
    margin-left: 1px;
  }

  .swatch-panel {
    width: 233px;
  }

  .stroke-panel {
    width: 231px;
  }

  .panel-bar {
    display: flex;
    align-items: center;
    justify-content: flex-end;
    gap: 12px;
    height: 12px;
    padding-right: 5px;
    border-bottom: 1px solid #383838;
    background: #424242;
  }

  .panel-foot {
    display: flex;
    align-items: center;
    justify-content: center;
    height: 8px;
    border-top: 1px solid #383838;
  }

  .box {
    height: 21px;
    padding: 0 4px 2px;
    border: 1px solid #5e5e5e;
    border-radius: 3px;
    background: #424242;
    color: #f0f0f0;
    font-size: 10px;
  }

  .color-body {
    padding: 6px 16px 6px 5px;
  }

  .color-top {
    display: flex;
    height: 104px;
  }

  .color-boxes {
    width: 46px;
  }

  .color-boxes .fill-stroke {
    margin-top: 6px;
  }

  .channels {
    display: flex;
    flex: 1;
    flex-direction: column;
    gap: 12px;
    padding: 2px 6px 0 0;
  }

  .channel {
    display: flex;
    align-items: center;
    justify-content: flex-end;
    color: #c8c8c8;
    font-size: 10px;
  }

  .channel label {
    width: 18px;
    padding-top: 2px;
  }

  .channel .box {
    width: 36px;
    margin-left: 8px;
  }

  input[type='range'] {
    width: 108px;
    height: 16px;
    margin-right: -7px;
    appearance: none;
    background: linear-gradient(90deg, var(--from), #fff) 0 4px / 102px 4px no-repeat;
  }

  input[type='range']::-webkit-slider-thumb {
    width: 9px;
    height: 16px;
    appearance: none;
    background: #c8c8c8;
    clip-path: polygon(50% 50%, 100% 75%, 100% 100%, 0 100%, 0 75%);
  }

  .hex-row {
    display: flex;
    align-items: center;
    height: 21px;
    font-size: 10px;
  }

  .basic {
    width: 40px;
    height: 14px;
    margin-right: auto;
  }

  .basic .black {
    background: #000;
  }

  .hex-row .box {
    width: 65px;
    margin-left: 4px;
  }

  .spectrum {
    height: 23px;
    margin-top: 7px;
    border: 1px solid #333;
    background: linear-gradient(#fff, rgba(255, 255, 255, 0) 45%, rgba(0, 0, 0, 0) 55%, #000),
      linear-gradient(90deg, #f00, #ff0, #0f0, #0ff, #00f, #f0f, #f00);
  }

  .swatch-body {
    padding: 6px 4px 0;
  }

  .swatch-top {
    display: flex;
    justify-content: space-between;
    height: 35px;
  }

  .view-toggle {
    display: flex;
    height: 24px;
    border: 1px solid #666;
    border-radius: 3px;
  }

  .view-toggle button {
    display: flex;
    align-items: center;
    justify-content: center;
    width: 24px;
  }

  .view-toggle .on {
    background: #2b2b2b;
  }

  .view-toggle .on svg {
    color: #fff;
  }

  .swatch-list {
    display: flex;
    justify-content: space-between;
    height: 52px;
    border: 1px solid #5e5e5e;
    overflow: hidden;
  }

  .swatch-grid {
    display: grid;
    grid-template-columns: repeat(14, 13px);
    grid-auto-rows: 13px;
    gap: 1px;
  }

  .swatch-grid .selected {
    padding: 1px;
    background: #fff;
  }

  .selected i {
    display: block;
    height: 11px;
    border: 1px solid #000;
  }

  .registration {
    background: #ddd;
  }

  .swatch-scroll {
    display: flex;
    flex-direction: column;
    align-items: center;
    justify-content: space-between;
    width: 12px;
    padding: 4px 0;
    background: #4a4a4a;
  }

  .swatch-actions {
    display: flex;
    justify-content: space-between;
    padding-right: 19px;
  }

  .swatch-actions svg {
    margin: 1px 0 0 1px;
  }

  .stroke-body {
    padding: 0 5px 0 4px;
    color: #c8c8c8;
    font-size: 11px;
    font-weight: 500;
  }

  .group {
    display: flex;
    flex-direction: column;
    gap: 5px;
    padding: 5px 0;
    border-bottom: 2px solid #4a4a4a;
  }

  .group.wide {
    gap: 8px;
    padding: 5px 0;
  }

  .group:last-child {
    border-bottom: 0;
  }

  .row {
    display: flex;
    align-items: center;
    height: 22px;
  }

  .row > label:first-child,
  .row-label {
    width: 46px;
    margin-right: 3px;
    text-align: right;
    white-space: nowrap;
  }

  .combo {
    display: flex;
    align-items: center;
    height: 21px;
    border: 1px solid #5e5e5e;
    border-radius: 3px;
    background: #4a4a4a;
    color: #f0f0f0;
    font-weight: 400;
  }

  .spin {
    display: flex;
    justify-content: center;
    width: 17px;
  }

  .combo input {
    width: 52px;
    height: 19px;
    padding: 0 4px;
    border: solid #5e5e5e;
    border-width: 0 1px;
    background: #424242;
    font-size: 10px;
  }

  .combo button {
    display: flex;
    justify-content: center;
    width: 17px;
  }

  .combo svg,
  .drop svg,
  .line-select svg {
    color: #f0f0f0;
  }

  .combo.scale {
    width: 58px;
    border-color: #5a5a5a;
    background: #5a5a5a;
    color: #767676;
  }

  .scale input {
    width: 39px;
    border-right: 0;
    border-color: #535353;
    background: #5a5a5a;
  }

  .scale svg {
    color: #767676;
  }

  .btns,
  .dash-btns {
    display: flex;
    height: 22px;
    border: 1px solid #5e5e5e;
    border-radius: 3px;
  }

  .btns button {
    width: 22px;
  }

  .btns button + button,
  .dash-btns button + button {
    border-left: 1px solid #5e5e5e;
  }

  .btns .on {
    background: #2b2b2b;
  }

  .btns .on svg {
    color: #fff;
  }

  .miter {
    display: flex;
    align-items: center;
    gap: 4px;
    margin-left: auto;
  }

  .miter .box {
    width: 40px;
  }

  .row.dash-row {
    justify-content: space-between;
  }

  .row > label.check {
    display: flex;
    align-items: center;
    gap: 5px;
    width: auto;
    color: #f0f0f0;
  }

  .check input {
    width: 12px;
    height: 12px;
    margin-left: 1px;
    appearance: none;
    border: 1px solid #d6d6d6;
    border-radius: 1px;
  }

  .dash-btns button {
    display: flex;
    align-items: center;
    justify-content: center;
    width: 38px;
  }

  .dash-btns svg {
    color: #767676;
  }

  .dashes {
    display: flex;
    gap: 3px;
    color: #767676;
  }

  .dashes label {
    display: flex;
    flex: 1;
    flex-direction: column;
    gap: 1px;
    min-width: 0;
    text-align: center;
  }

  .dashes input {
    width: 100%;
    height: 21px;
    border-radius: 2px;
    background: #5a5a5a;
  }

  .arrowheads {
    display: flex;
    gap: 6px;
  }

  .line-select {
    position: relative;
    display: flex;
    align-items: center;
    width: 58px;
    height: 21px;
    border: 1px solid #5e5e5e;
    border-radius: 3px;
    background: #424242;
  }

  .line-select select {
    flex: 1;
    height: 19px;
    min-width: 0;
    padding-right: 4px;
    appearance: none;
    background: #e2e2e2;
    color: #000;
    font-weight: 400;
    text-align-last: right;
  }

  .line-select i {
    position: absolute;
    left: 5px;
    width: 28px;
    height: 3px;
    background: #000;
    pointer-events: none;
  }

  .line-select span {
    display: flex;
    justify-content: center;
    width: 18px;
  }

  .profile {
    width: 117px;
  }

  .profile i {
    width: 63px;
  }

  .end {
    margin-right: 5px;
    margin-left: auto;
  }

  .flips {
    display: flex;
    gap: 10px;
    margin-left: 10px;
  }

  .taskbar-edge {
    height: 2px;
    background: #262626;
  }
</style>
